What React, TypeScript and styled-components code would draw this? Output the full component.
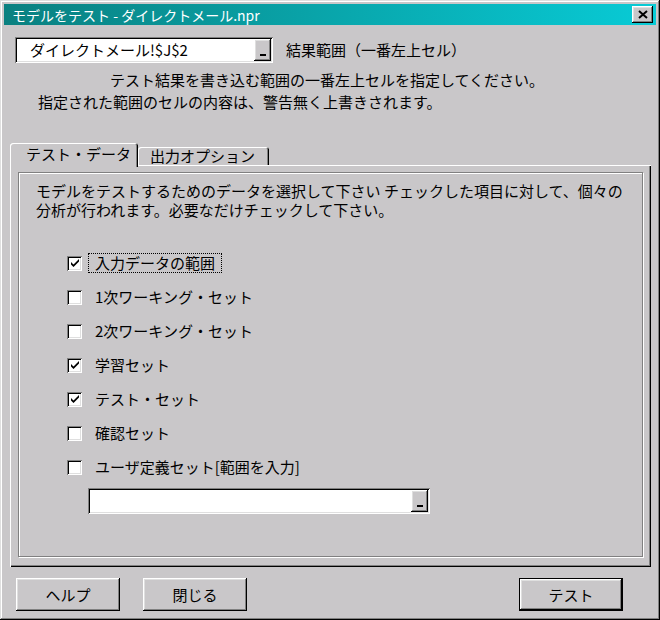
import React from 'react';
import styled, { createGlobalStyle } from 'styled-components';

const FACE = '#c9c7c9';

const GlobalStyle = createGlobalStyle`
  html, body { margin: 0; padding: 0; background: ${FACE}; }
  body {
    font-family: "Noto Sans CJK JP", "Noto Sans", sans-serif;
    font-size: 15px;
    color: #000;
  }
  * { box-sizing: border-box; }
`;

const raisedShadow = `inset -1px -1px #000, inset 1px 1px #fff, inset -2px -2px #808080, inset 2px 2px #dfdfdf`;
const sunkenShadow = `inset 1px 1px #808080, inset -1px -1px #fff, inset 2px 2px #000, inset -2px -2px #dfdfdf`;

const Window = styled.div`
  width: 660px;
  height: 620px;
  background: ${FACE};
  padding: 4px;
  display: flex;
  flex-direction: column;
  box-shadow: inset -1px -1px #000, inset 1px 1px #dfdfdf, inset -2px -2px #808080, inset 2px 2px #fff;
`;

const TitleBar = styled.div`
  height: 21px;
  background: linear-gradient(to right, #0a8080, #08cbd6);
  display: flex;
  align-items: center;
  justify-content: space-between;
  padding: 0 3px 0 8px;
`;

const TitleText = styled.span`
  color: #fff;
  font-size: 14px;
  line-height: 1;
  white-space: nowrap;
`;

const CloseButton = styled.div`
  width: 21px;
  height: 17px;
  background: ${FACE};
  box-shadow: ${raisedShadow};
  display: flex;
  align-items: center;
  justify-content: center;
`;

const Body = styled.div`
  flex: 1;
  display: flex;
  flex-direction: column;
  padding: 0 5px 0 6px;
`;

const TopRow = styled.div`
  margin-top: 12px;
  padding-left: 5px;
  display: flex;
  align-items: center;
  gap: 13px;
`;

const Combo = styled.div<{ $w: number }>`
  width: ${(p) => p.$w}px;
  height: 26px;
  background: #fff;
  box-shadow: ${sunkenShadow};
  display: flex;
  padding: 2px;
`;

const ComboText = styled.div`
  flex: 1;
  padding-left: 13px;
  line-height: 22px;
  white-space: nowrap;
`;

const ComboButton = styled.div`
  width: 17px;
  background: ${FACE};
  box-shadow: ${raisedShadow};
  display: flex;
  align-items: flex-end;
  justify-content: center;
  padding-bottom: 5px;
`;

const Dash = styled.span`
  width: 6px;
  height: 2px;
  background: #000;
`;

const Label = styled.span`
  white-space: nowrap;
  line-height: 18px;
`;

const Hint = styled.div<{ $left: number; $top: number }>`
  margin-top: ${(p) => p.$top}px;
  padding-left: ${(p) => p.$left}px;
  line-height: 18px;
  white-space: nowrap;
`;

const TabRow = styled.div`
  margin-top: 32px;
  height: 22px;
  display: flex;
  align-items: flex-end;
  position: relative;
  z-index: 1;
`;

const Tab = styled.div<{ $active?: boolean; $w: number; $pl: number }>`
  width: ${(p) => p.$w}px;
  height: ${(p) => (p.$active ? 24 : 18)}px;
  margin-bottom: ${(p) => (p.$active ? -2 : 0)}px;
  padding-left: ${(p) => p.$pl}px;
  padding-top: ${(p) => (p.$active ? 2 : 0)}px;
  line-height: ${(p) => (p.$active ? 18 : 17)}px;
  background: ${FACE};
  border-radius: 3px 3px 0 0;
  white-space: nowrap;
  box-shadow: inset 1px 1px #fff, inset -1px 0 #000, inset -2px 0 #808080;
`;

const Panel = styled.div`
  width: 641px;
  height: 402px;
  padding: 7px 8px 10px 8px;
  display: flex;
  flex-direction: column;
  box-shadow: inset 1px 1px #fff, inset -1px -1px #000, inset -2px -2px #808080;
`;

const Frame = styled.div`
  flex: 1;
  border: 1px solid #808080;
  box-shadow: inset 1px 1px #fff, 1px 1px #fff;
  padding: 8px 16px 0 17px;
  display: flex;
  flex-direction: column;
`;

const Description = styled.div`
  line-height: 19px;
  white-space: nowrap;
`;

const CheckList = styled.div`
  margin-top: 27px;
  margin-left: 31px;
  display: flex;
  flex-direction: column;
`;

const CheckRow = styled.div`
  height: 34px;
  display: flex;
  align-items: center;
  gap: 6px;
`;

const Box = styled.div`
  width: 15px;
  height: 15px;
  background: #fff;
  box-shadow: ${sunkenShadow};
  display: flex;
  align-items: center;
  justify-content: center;
`;

const CheckLabel = styled.span<{ $focus?: boolean }>`
  padding: 0 6px;
  border: 1px dotted ${(p) => (p.$focus ? '#000' : 'transparent')};
  line-height: 18px;
  white-space: nowrap;
`;

const RangeCombo = styled.div`
  margin-top: 4px;
  margin-left: 52px;
`;

const ButtonRow = styled.div`
  margin-top: 11px;
  display: flex;
  padding: 0 28px 0 6px;
`;

const Spacer = styled.div`
  flex: 1;
`;

const Button = styled.div<{ $default?: boolean; $ml?: number }>`
  width: 104px;
  height: 33px;
  margin-left: ${(p) => p.$ml ?? 0}px;
  display: flex;
  align-items: center;
  justify-content: center;
  background: ${FACE};
  box-shadow: ${(p) =>
    p.$default
      ? `inset 0 0 0 1px #000, inset -2px -2px #000, inset 2px 2px #fff, inset -3px -3px #808080, inset 3px 3px #dfdfdf`
      : raisedShadow};
  white-space: nowrap;
`;

const CheckMark = () => (
  <svg width="10" height="10" viewBox="0 0 10 10">
    <path d="M1 4 L1 6.5 L3.5 9 L9 3.5 L9 1 L3.5 6.5 Z" fill="#000" />
  </svg>
);

const CloseX = () => (
  <svg width="10" height="9" viewBox="0 0 10 9">
    <path d="M1 1 L9 8 M9 1 L1 8" stroke="#000" strokeWidth="2" />
  </svg>
);

const items: { label: string; checked: boolean; focus?: boolean }[] = [
  { label: '入力データの範囲', checked: true, focus: true },
  { label: '1次ワーキング・セット', checked: false },
  { label: '2次ワーキング・セット', checked: false },
  { label: '学習セット', checked: true },
  { label: 'テスト・セット', checked: true },
  { label: '確認セット', checked: false },
  { label: 'ユーザ定義セット[範囲を入力]', checked: false },
];

export default function App() {
  return (
    <>
      <GlobalStyle />
      <Window>
        <TitleBar>
          <TitleText>モデルをテスト - ダイレクトメール.npr</TitleText>
          <CloseButton>
            <CloseX />
          </CloseButton>
        </TitleBar>
        <Body>
          <TopRow>
            <Combo $w={258}>
              <ComboText>ダイレクトメール!$J$2</ComboText>
              <ComboButton>
                <Dash />
              </ComboButton>
            </Combo>
            <Label>結果範囲（一番左上セル）</Label>
          </TopRow>
          <Hint $left={100} $top={8}>
            テスト結果を書き込む範囲の一番左上セルを指定してください。
          </Hint>
          <Hint $left={28} $top={4}>
            指定された範囲のセルの内容は、警告無く上書きされます。
          </Hint>
          <TabRow>
            <Tab $active $w={128} $pl={16}>
              テスト・データ
            </Tab>
            <Tab $w={131} $pl={12}>
              出力オプション
            </Tab>
          </TabRow>
          <Panel>
            <Frame>
              <Description>
                モデルをテストするためのデータを選択して下さい チェックした項目に対して、個々の
                <br />
                分析が行われます。必要なだけチェックして下さい。
              </Description>
              <CheckList>
                {items.map((it) => (
                  <CheckRow key={it.label}>
                    <Box>{it.checked && <CheckMark />}</Box>
                    <CheckLabel $focus={it.focus}>{it.label}</CheckLabel>
                  </CheckRow>
                ))}
              </CheckList>
              <RangeCombo>
                <Combo $w={342}>
                  <ComboText />
                  <ComboButton>
                    <Dash />
                  </ComboButton>
                </Combo>
              </RangeCombo>
            </Frame>
          </Panel>
          <ButtonRow>
            <Button>ヘルプ</Button>
            <Button $ml={23}>閉じる</Button>
            <Spacer />
            <Button $default>テスト</Button>
          </ButtonRow>
        </Body>
      </Window>
    </>
  );
}
